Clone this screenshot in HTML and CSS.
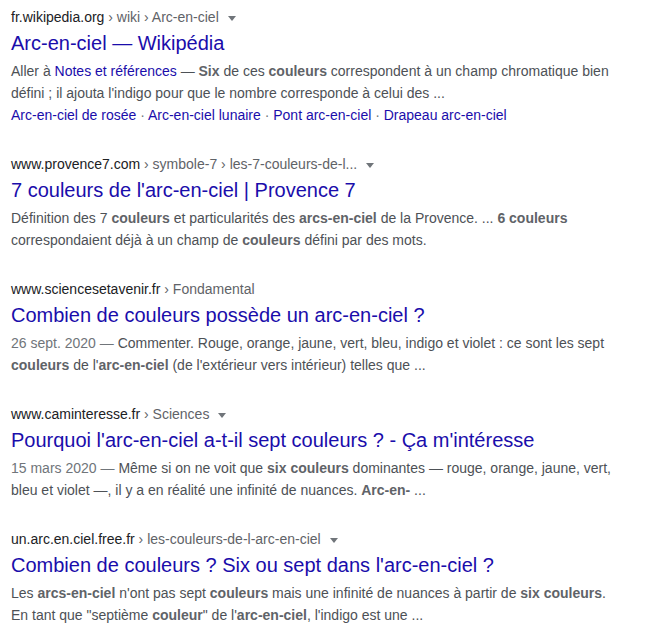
FILE: index.html
```html
<!DOCTYPE html>
<html lang="fr">
<head>
  <meta charset="UTF-8">
  <meta name="viewport" content="width=device-width, initial-scale=1.0">
  <link rel="stylesheet" href="styles.css">
  <title>arc-en-ciel couleurs - Recherche</title>
</head>
<body>
  <div class="results">

    <!-- result 1 -->
    <div class="result">
      <div class="cite">fr.wikipedia.org<span class="crumbs"> › wiki › Arc-en-ciel</span><span class="arrow"></span></div>
      <h3 class="title"><a href="#">Arc-en-ciel — Wikipédia</a></h3>
      <div class="snippet">
        Aller à <a href="#">Notes et références</a> — <b>Six</b> de ces <b>couleurs</b> correspondent à un champ chromatique bien<br>
        défini ; il ajouta l'indigo pour que le nombre corresponde à celui des ...
      </div>
      <div class="sitelinks">
        <a href="#">Arc-en-ciel de rosée</a><span class="sep"> · </span><a href="#">Arc-en-ciel lunaire</a><span class="sep"> · </span><a href="#">Pont arc-en-ciel</a><span class="sep"> · </span><a href="#">Drapeau arc-en-ciel</a>
      </div>
    </div>

    <!-- result 2 -->
    <div class="result">
      <div class="cite">www.provence7.com<span class="crumbs"> › symbole-7 › les-7-couleurs-de-l...</span><span class="arrow"></span></div>
      <h3 class="title"><a href="#">7 couleurs de l'arc-en-ciel | Provence 7</a></h3>
      <div class="snippet">
        Définition des 7 <b>couleurs</b> et particularités des <b>arcs-en-ciel</b> de la Provence. ... <b>6 couleurs</b><br>
        correspondaient déjà à un champ de <b>couleurs</b> défini par des mots.
      </div>
    </div>

    <!-- result 3 -->
    <div class="result">
      <div class="cite">www.sciencesetavenir.fr<span class="crumbs"> › Fondamental</span></div>
      <h3 class="title"><a href="#">Combien de couleurs possède un arc-en-ciel ?</a></h3>
      <div class="snippet">
        <span class="date">26 sept. 2020 — </span>Commenter. Rouge, orange, jaune, vert, bleu, indigo et violet : ce sont les sept<br>
        <b>couleurs</b> de l'<b>arc-en-ciel</b> (de l'extérieur vers intérieur) telles que ...
      </div>
    </div>

    <!-- result 4 -->
    <div class="result">
      <div class="cite">www.caminteresse.fr<span class="crumbs"> › Sciences</span><span class="arrow"></span></div>
      <h3 class="title"><a href="#">Pourquoi l'arc-en-ciel a-t-il sept couleurs ? - Ça m'intéresse</a></h3>
      <div class="snippet">
        <span class="date">15 mars 2020 — </span>Même si on ne voit que <b>six couleurs</b> dominantes — rouge, orange, jaune, vert,<br>
        bleu et violet —, il y a en réalité une infinité de nuances. <b>Arc-en-</b> ...
      </div>
    </div>

    <!-- result 5 -->
    <div class="result">
      <div class="cite">un.arc.en.ciel.free.fr<span class="crumbs"> › les-couleurs-de-l-arc-en-ciel</span><span class="arrow"></span></div>
      <h3 class="title"><a href="#">Combien de couleurs ? Six ou sept dans l'arc-en-ciel ?</a></h3>
      <div class="snippet">
        Les <b>arcs-en-ciel</b> n'ont pas sept <b>couleurs</b> mais une infinité de nuances à partir de <b>six couleurs</b>.<br>
        En tant que "septième <b>couleur</b>" de l'<b>arc-en-ciel</b>, l'indigo est une ...
      </div>
    </div>

  </div>
</body>
</html>
```

FILE: styles.css
```css
html, body {
  margin: 0;
  background-color: #fff;
  font-family: Arial, "Liberation Sans", sans-serif;
}

.results {
  padding: 7px 11px;
}

.result {
  margin-bottom: 28px;
}

.cite {
  font-size: 14px;
  line-height: 20px;
  color: #202124;
  white-space: nowrap;
}

.crumbs {
  color: #5f6368;
}

.arrow {
  display: inline-block;
  margin-left: 9px;
  vertical-align: middle;
  border-style: solid;
  border-color: #70757a transparent;
  border-width: 5px 4px 0 4px;
}

.title {
  margin: 0;
  padding: 3px 0 4px;
  font-size: 20px;
  font-weight: normal;
  line-height: 26px;
}

.title a,
.sitelinks a,
.snippet a {
  color: #1a0dab;
  text-decoration: none;
}

.snippet {
  font-size: 14px;
  line-height: 22px;
  color: #4d5156;
  white-space: nowrap;
}

.snippet b {
  color: #5f6368;
}

.date {
  color: #70757a;
}

.sitelinks {
  font-size: 14px;
  line-height: 22px;
}

.sep {
  color: #70757a;
}
```
